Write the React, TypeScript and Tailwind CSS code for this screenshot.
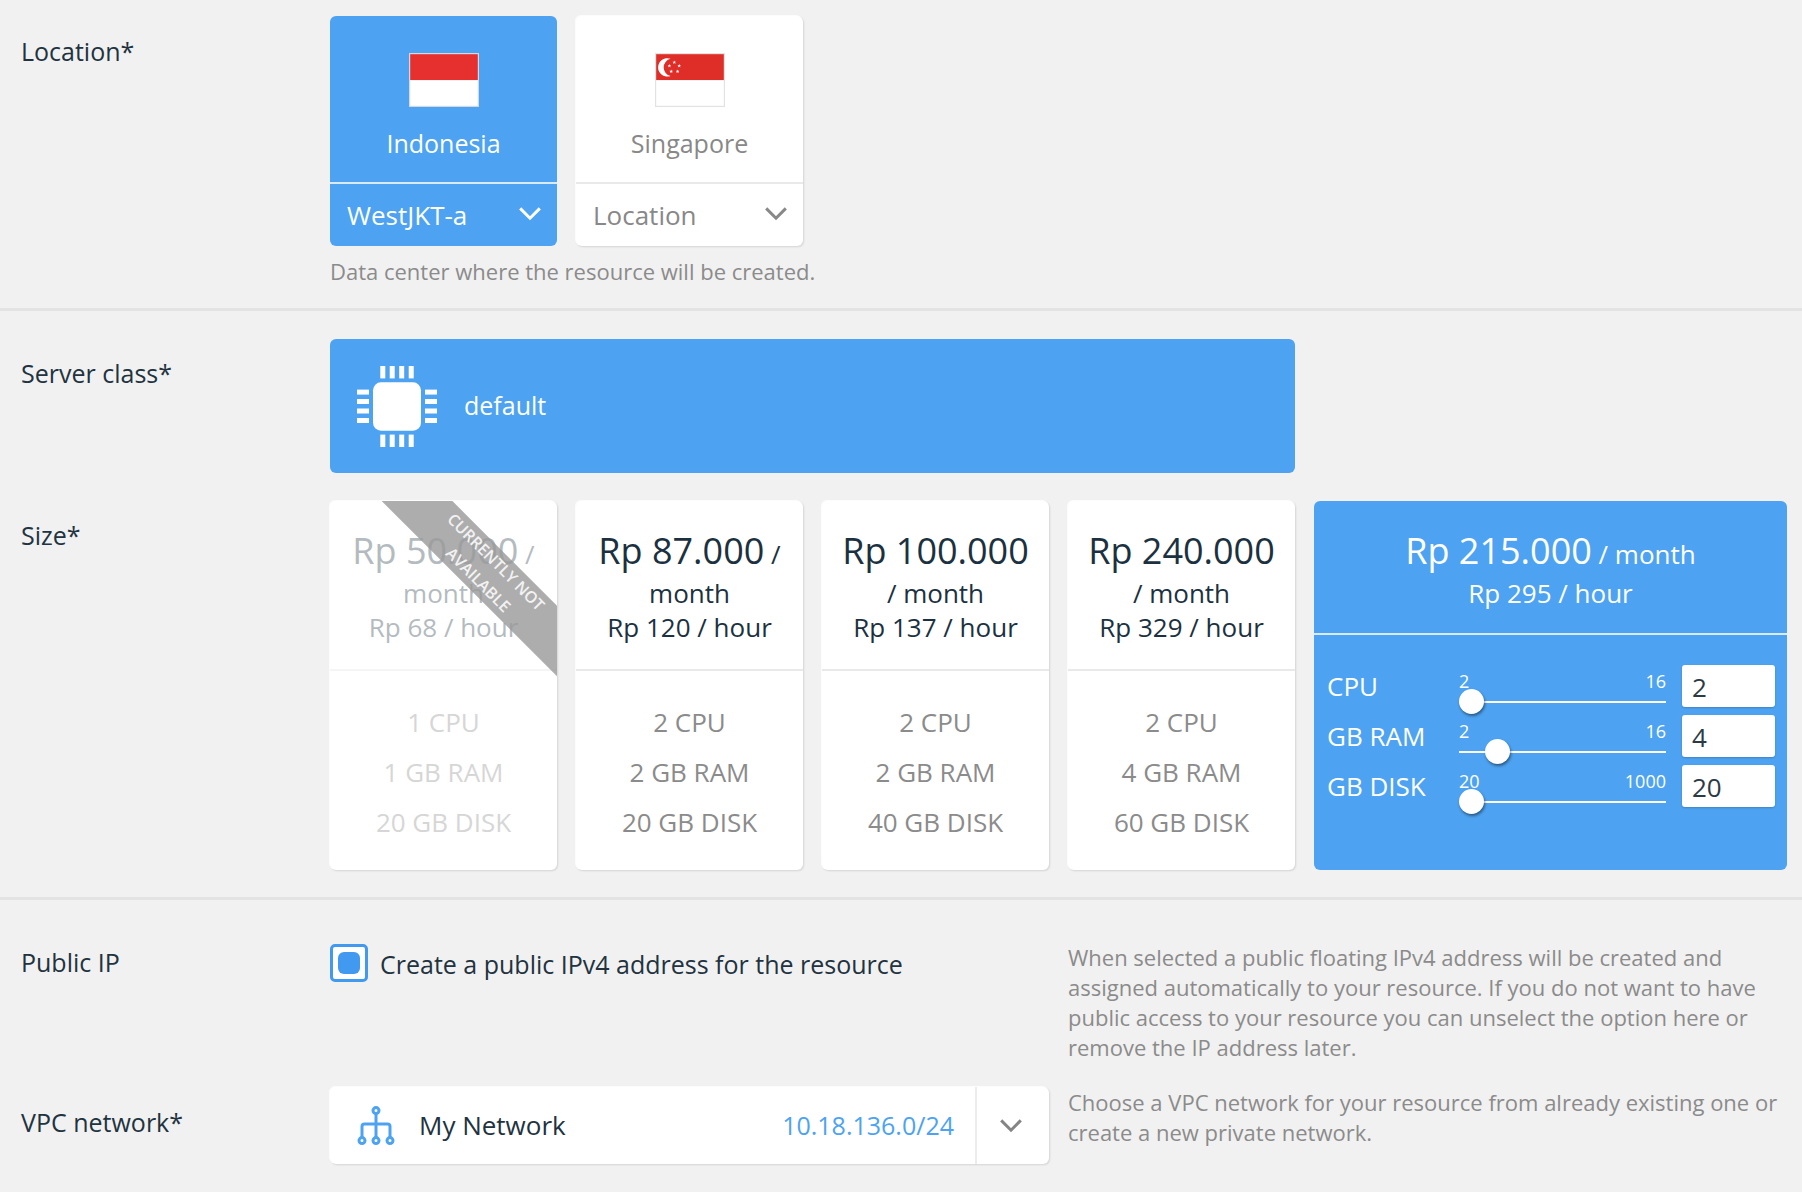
import { useState } from "react";
import type { ReactNode } from "react";

const card =
  "rounded-md bg-white shadow-[-1px_-1px_0_#fcfcfc,1px_1px_2px_rgba(0,0,0,0.12)]";

const hint = "text-[22px] leading-[30px] text-[#8b8b8b]";

function Chevron({ className = "" }: { className?: string }) {
  return (
    <svg viewBox="0 0 22 14" className={`h-[14px] w-[22px] ${className}`} fill="none" stroke="currentColor" strokeWidth="3" aria-hidden="true">
      <path d="M1.2 1.4 11 11.2l9.8-9.8" />
    </svg>
  );
}

function IndonesiaFlag() {
  return (
    <svg viewBox="0 0 70 54" className="h-[54px] w-[70px]" aria-hidden="true">
      <rect width="70" height="54" fill="#d3d9de" />
      <rect x="1.2" y="1.2" width="67.6" height="26" fill="#e6302f" />
      <rect x="1.2" y="27.2" width="67.6" height="25.6" fill="#fff" />
    </svg>
  );
}

function SingaporeFlag() {
  const stars = [
    [19.3, 9.3],
    [14.4, 12.8],
    [24.2, 12.8],
    [16.2, 18.4],
    [22.6, 18.4],
  ];
  return (
    <svg viewBox="0 0 70 54" className="h-[54px] w-[70px]" aria-hidden="true">
      <rect width="70" height="54" fill="#e2e2e2" />
      <rect x="1.2" y="1.2" width="67.6" height="26" fill="#df2d27" />
      <rect x="1.2" y="27.2" width="67.6" height="25.6" fill="#fff" />
      <path d="M15.6 5.8a9.2 9.2 0 1 0 0 17.2 8.8 8.8 0 0 1 0-17.2Z" fill="#fff" />
      {stars.map(([x, y]) => (
        <path
          key={`${x}-${y}`}
          transform={`translate(${x} ${y})`}
          d="M0-1.9.5-.6 1.8-.6.8.3 1.2 1.6 0 .8-1.2 1.6-.8.3-1.8-.6-.5-.6Z"
          fill="#fff"
        />
      ))}
    </svg>
  );
}

function ChipIcon() {
  const pins = [23.3, 32.7, 42.2, 51.7];
  return (
    <svg viewBox="0 0 80 81" className="h-[81px] w-[80px] shrink-0" fill="#fff" aria-hidden="true">
      <rect x="16" y="16.3" width="48" height="48.4" rx="8" />
      {pins.map((p) => (
        <g key={p}>
          <rect x={p} y="0" width="5" height="12.4" />
          <rect x={p} y="68.6" width="5" height="12.4" />
          <rect x="0" y={p + 0.3} width="12" height="5" />
          <rect x="68" y={p + 0.3} width="12" height="5" />
        </g>
      ))}
    </svg>
  );
}

function NetworkIcon() {
  return (
    <svg viewBox="0 0 38 40" className="h-[40px] w-[38px] shrink-0" fill="none" stroke="#4da3f1" strokeWidth="3" aria-hidden="true">
      <circle cx="19" cy="4.6" r="3" />
      <path d="M19 7.6v23.6M5 31.2V20.5q0-2.5 2.500-2.500h23q2.500 0 2.500 2.500v10.700" />
      <circle cx="5" cy="34.6" r="3" />
      <circle cx="19" cy="34.6" r="3" />
      <circle cx="33" cy="34.6" r="3" />
    </svg>
  );
}

function LocationCard({
  name,
  flag,
  option,
  selected = false,
}: {
  name: string;
  flag: ReactNode;
  option: string;
  selected?: boolean;
}) {
  const tone = selected ? "rounded-md bg-[#4da3f1] text-white" : `${card} text-[#888]`;
  const line = selected ? "border-[#d9ebfb]" : "border-[#e9e9e9]";
  return (
    <div className={`flex flex-col ${tone}`}>
      <button type="button" aria-pressed={selected} className="flex flex-col items-center gap-[18px] pt-[37px] pb-[21px]">
        {flag}
        <span className="leading-9">{name}</span>
      </button>
      <div className={`relative flex items-center border-t-2 ${line}`}>
        <select aria-label={`${name} data center`} className="h-[62px] w-full appearance-none bg-transparent pr-12 pl-[17px] text-[26px]">
          <option>{option}</option>
        </select>
        <Chevron className="pointer-events-none absolute right-4 mb-0.5" />
      </div>
    </div>
  );
}

type Plan = { price: string; slash: boolean; hour: string; cpu: number; ram: number; disk: number; off?: boolean };

const plans: Plan[] = [
  { price: "50.000", slash: true, hour: "68", cpu: 1, ram: 1, disk: 20, off: true },
  { price: "87.000", slash: true, hour: "120", cpu: 2, ram: 2, disk: 20 },
  { price: "100.000", slash: false, hour: "137", cpu: 2, ram: 2, disk: 40 },
  { price: "240.000", slash: false, hour: "329", cpu: 2, ram: 4, disk: 60 },
];

function PlanCard({ plan }: { plan: Plan }) {
  const { price, slash, hour, cpu, ram, disk, off } = plan;
  return (
    <button type="button" disabled={off} className={`relative flex flex-col overflow-hidden text-[26px] ${card}`}>
      <span className={`flex h-[168px] w-full flex-col items-center pt-7 whitespace-nowrap ${off ? "text-[#b4bbbf]" : "text-[#1c313f]"}`}>
        <span className="leading-[44px]">
          <span className="text-4xl leading-[44px]">Rp {price}</span>
          {slash && " /"}
        </span>
        <span className="leading-[34px]">{slash ? "month" : "/ month"}</span>
        <span className="leading-[34px]">Rp {hour} / hour</span>
      </span>
      <span
        className={`flex w-full flex-1 flex-col items-center border-t-2 pt-[26px] leading-[50px] ${
          off ? "border-[#f5f5f5] text-[#d6d6d6]" : "border-[#e9e9e9] text-[#8b8b8b]"
        }`}
      >
        <span>{cpu} CPU</span>
        <span>{ram} GB RAM</span>
        <span>{disk} GB DISK</span>
      </span>
      {off && (
        <span className="absolute top-[45px] -right-20 w-[300px] rotate-45 bg-[#989898]/80 text-center text-base leading-[25px] font-semibold text-[#f2f2f2]">
          CURRENTLY NOT
          <br />
          AVAILABLE
        </span>
      )}
    </button>
  );
}

function SliderRow({ label, min, max, initial }: { label: string; min: number; max: number; initial: number }) {
  const [value, setValue] = useState(initial);
  return (
    <div className="flex h-[42px] items-center">
      <label htmlFor={label} className="w-[132px] shrink-0">
        {label}
      </label>
      <div className="min-w-0 flex-1 self-start pt-2">
        <div className="flex justify-between text-lg leading-4">
          <span>{min}</span>
          <span>{max}</span>
        </div>
        <input
          type="range"
          aria-label={`${label} slider`}
          min={min}
          max={max}
          value={value}
          onChange={(e) => setValue(Number(e.target.value))}
          className="block h-[26px] w-full appearance-none bg-transparent [&::-webkit-slider-runnable-track]:h-[2px] [&::-webkit-slider-runnable-track]:bg-white [&::-webkit-slider-thumb]:-mt-3 [&::-webkit-slider-thumb]:size-[25px] [&::-webkit-slider-thumb]:appearance-none [&::-webkit-slider-thumb]:rounded-full [&::-webkit-slider-thumb]:bg-white [&::-webkit-slider-thumb]:shadow-[1px_2px_3px_rgba(0,0,0,0.45)]"
        />
      </div>
      <input
        id={label}
        type="text"
        value={value}
        onChange={(e) => setValue(Number(e.target.value) || 0)}
        className="ml-4 h-[42px] w-[93px] shrink-0 rounded-[3px] bg-white pt-0.5 pl-2.5 text-[#2b3a45] shadow-[0_1px_2px_rgba(0,0,0,0.2)]"
      />
    </div>
  );
}

function Row({
  label,
  children,
  className = "",
  labelClassName = "pt-[17px]",
}: {
  label: string;
  children: ReactNode;
  className?: string;
  labelClassName?: string;
}) {
  return (
    <div className={`grid grid-cols-[309px_1fr] pr-[15px] pl-[21px] ${className}`}>
      <div className={`leading-9 ${labelClassName}`}>{label}</div>
      <div className="grid grid-cols-6 gap-x-[19px]">{children}</div>
    </div>
  );
}

export default function App() {
  const [publicIp, setPublicIp] = useState(true);
  return (
    <main className="min-h-screen bg-[#f1f1f1] font-['Open_Sans','Noto_Sans',sans-serif] text-[25px] text-[#22333f]">
      <section className="border-b-[3px] border-[#e3e3e3] pt-4 pb-[22px]">
        <Row label="Location*">
          <LocationCard name="Indonesia" flag={<IndonesiaFlag />} option="WestJKT-a" selected />
          <LocationCard name="Singapore" flag={<SingaporeFlag />} option="Location" />
          <p className={`col-span-6 pt-2.5 ${hint}`}>Data center where the resource will be created.</p>
        </Row>
      </section>

      <section className="border-b-[3px] border-[#e3e3e3] pt-7 pb-[27px]">
        <Row label="Server class*" labelClassName="pt-4">
          <button type="button" aria-pressed="true" className="col-span-4 flex h-[134px] items-center gap-[27px] rounded-md bg-[#4da3f1] pl-[27px] text-white">
            <ChipIcon />
            default
          </button>
        </Row>
        <Row label="Size*" className="mt-7" labelClassName="pt-4">
          {plans.map((plan) => (
            <PlanCard key={plan.price} plan={plan} />
          ))}
          <div className="col-span-2 h-[369px] rounded-md bg-[#4da3f1] text-[26px] text-white">
            <div className="flex h-[132px] flex-col items-center pt-7 whitespace-nowrap">
              <div className="leading-[44px]">
                <span className="text-4xl leading-[44px]">Rp 215.000</span> / month
              </div>
              <div className="leading-[34px]">Rp 295 / hour</div>
            </div>
            <div className="flex flex-col gap-2 border-t-2 border-[#d9ebfb] pt-[30px] pr-3 pl-[13px]">
              <SliderRow label="CPU" min={2} max={16} initial={2} />
              <SliderRow label="GB RAM" min={2} max={16} initial={4} />
              <SliderRow label="GB DISK" min={20} max={1000} initial={20} />
            </div>
          </div>
        </Row>
      </section>

      <section className="pt-[42px] pb-5">
        <Row label="Public IP" labelClassName="pt-0.5">
          <label className="col-span-3 flex items-center gap-3 self-start">
            <input
              type="checkbox"
              checked={publicIp}
              onChange={(e) => setPublicIp(e.target.checked)}
              className="grid size-[38px] shrink-0 appearance-none place-items-center rounded-[5px] border-[3px] border-[#4199f0] bg-white before:size-[22px] before:rounded-md checked:before:bg-[#4199f0]"
            />
            <span className="pt-1">Create a public IPv4 address for the resource</span>
          </label>
          <p className={`col-span-3 ${hint}`}>
            When selected a public floating IPv4 address will be created and assigned automatically to your resource. If you
            do not want to have public access to your resource you can unselect the option here or remove the IP address
            later.
          </p>
        </Row>
        <Row label="VPC network*" className="mt-[25px]">
          <button type="button" aria-haspopup="listbox" className={`col-span-3 flex h-[77px] items-stretch ${card}`}>
            <span className="flex flex-1 items-center pr-[21px] pl-[27px]">
              <NetworkIcon />
              <span className="ml-6 text-[26px]">My Network</span>
              <span className="ml-auto text-[#4da3f1]">10.18.136.0/24</span>
            </span>
            <span className="grid w-[74px] place-items-center border-l-2 border-[#ececec] pr-1 text-[#858585]">
              <Chevron />
            </span>
          </button>
          <p className={`col-span-3 ${hint}`}>
            Choose a VPC network for your resource from already existing one or create a new private network.
          </p>
        </Row>
      </section>
    </main>
  );
}
